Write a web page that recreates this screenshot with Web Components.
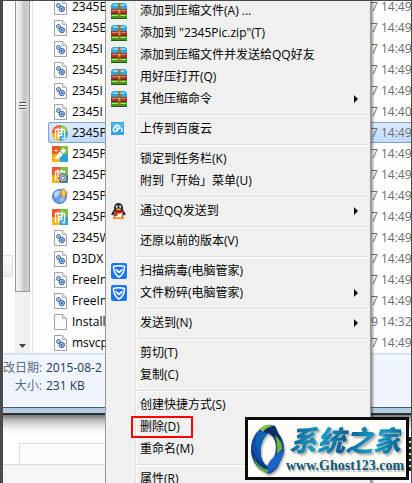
<!DOCTYPE html>
<html lang="zh-CN">
<head>
<meta charset="utf-8">
<title>Context menu</title>
<style>
  body {
    margin: 0;
    height: 100vh;
    overflow: hidden;
    font: 12px/18px "Open Sans", "Noto Sans CJK SC", sans-serif;
    color: #000;
  }
</style>
</head>
<body>
<desktop-view>
  <explorer-window>
    <tree-pane slot="tree"></tree-pane>
    <file-list slot="files"></file-list>
    <details-pane slot="details"></details-pane>
  </explorer-window>
  <page-behind></page-behind>
  <context-menu slot="menu">
    <menu-item icon="zip">添加到压缩文件(A) ...</menu-item>
    <menu-item icon="zip">添加到 "2345Pic.zip"(T)</menu-item>
    <menu-item icon="zip">添加到压缩文件并发送给QQ好友</menu-item>
    <menu-item icon="zip">用好压打开(Q)</menu-item>
    <menu-item icon="zip" submenu>其他压缩命令</menu-item>
    <menu-separator></menu-separator>
    <menu-item icon="cloud">上传到百度云</menu-item>
    <menu-separator></menu-separator>
    <menu-item>锁定到任务栏(K)</menu-item>
    <menu-item>附到「开始」菜单(U)</menu-item>
    <menu-separator></menu-separator>
    <menu-item icon="qq" submenu>通过QQ发送到</menu-item>
    <menu-separator></menu-separator>
    <menu-item>还原以前的版本(V)</menu-item>
    <menu-separator></menu-separator>
    <menu-item icon="shield">扫描病毒(电脑管家)</menu-item>
    <menu-item icon="shield" submenu>文件粉碎(电脑管家)</menu-item>
    <menu-separator></menu-separator>
    <menu-item submenu>发送到(N)</menu-item>
    <menu-separator></menu-separator>
    <menu-item>剪切(T)</menu-item>
    <menu-item>复制(C)</menu-item>
    <menu-separator></menu-separator>
    <menu-item>创建快捷方式(S)</menu-item>
    <menu-item marked>删除(D)</menu-item>
    <menu-item>重命名(M)</menu-item>
    <menu-separator></menu-separator>
    <menu-item>属性(R)</menu-item>
  </context-menu>
  <site-badge slot="badge"></site-badge>
</desktop-view>

<script>
const TILE = `
  <path d="M0 0H8V8H0Z" fill="#f0562c"/><path d="M8 0H16V8H8Z" fill="#7cc142"/>
  <path d="M0 8H8V16H0Z" fill="#f9b21c"/><path d="M8 8H16V16H8Z" fill="#2ba3dc"/>`;
const GLYPH = `<path d="M3.500 13.500V4.500H12.500V13.500H10M6 2.500V7M10 2.500V7M5.500 7.500H10.500M5.500 10.500H10.500M6.500 7.500V13.500M9.500 7.500V11" fill="none" stroke="#fff" stroke-width="1.300"/>`;
const PAGE = `
  <path d="M2.500 .5H10.500L14.500 4.500V15.500H2.500Z" fill="#fcfcfc" stroke="#a2a2a2"/>
  <path d="M10.500 .5V4.500H14.500" fill="#e6e6e6" stroke="#b0b0b0"/>`;

const ICONS = {
  page: PAGE,
  dll: PAGE + `
    <circle cx="6.500" cy="6.500" r="2" fill="#c5dcf2" stroke="#3a6aa8"/>
    <circle cx="6.500" cy="6.500" r=".6" fill="#3a6aa8"/>
    <circle cx="9.800" cy="10" r="2.600" fill="#a9c9e8" stroke="#3a6aa8"/>
    <circle cx="9.800" cy="10" r="2.900" fill="none" stroke="#3a6aa8" stroke-dasharray=".8 1.200"/>
    <circle cx="9.800" cy="10" r=".9" fill="#1d4c8c"/>`,
  round: `
    <clipPath id="c"><circle cx="8" cy="8" r="8"/></clipPath>
    <g clip-path="url(#c)">${TILE}${GLYPH}</g>`,
  tile: TILE + GLYPH,
  brush: TILE + `
    <path d="M2.500 12.500L7.500 5.500L11 8.500L6 13.500L5 12L4.500 13.500Z" fill="#fff"/>
    <path d="M8.500 5L11.500 2L14 4.500L11.500 7.500Z" fill="#fff"/>
    <path d="M2.500 4.500H5.500M4 3V6" stroke="#ffe4a0"/>`,
  gear: TILE + GLYPH + `
    <circle cx="11" cy="11" r="4" fill="#8d9399" stroke="#555b62" stroke-width="2" stroke-dasharray="1.600 1.200"/>
    <circle cx="11" cy="11" r="3.300" fill="#aeb4ba"/><circle cx="11" cy="11" r="1.500" fill="#f4f4f4" stroke="#555b62" stroke-width=".6"/>`,
  globe: `
    <circle cx="7.500" cy="8.500" r="7" fill="#6d9ee8" stroke="#4b78c9"/>
    <path d="M2 6Q4 2 8 3Q9 6 6 7Q6 10 3 9Z" fill="#bcd8fb"/><path d="M8 10Q12 8 13 10Q11 14 8 14Z" fill="#9cc2f5"/>
    <path d="M11.500 .5L15.500 5H13.500V9H9.500V5H7.500Z" fill="#f7c667" stroke="#b98527"/>`,
  zip: `
    <path d="M2 0H14L16 2V6H0V2Z" fill="#2ba6df"/><path d="M2.500 1H13.500L14.500 3H1.500Z" fill="#7fd4f5"/>
    <path d="M0 6H16V11H0Z" fill="#b43222"/><path d="M1 7.500H15" stroke="#ef8160"/><path d="M0 10.500H16" stroke="#7d2018"/>
    <path d="M0 11H16V15.500H0Z" fill="#3a9a22"/><path d="M1 12.500H15" stroke="#b0e665"/><path d="M0 15.500H16" stroke="#1d6212"/>
    <path d="M7 0H9.500V15H7Z" fill="#a96d23"/><path d="M6.500 6H10V10H6.500Z" fill="#d49a49" stroke="#75410e" stroke-width=".7"/>`,
  cloud: `
    <path d="M0 1H13V14H0Z" fill="#35a3e0"/><path d="M1 2H12V6H1Z" fill="#55b9ec"/>
    <circle cx="4.300" cy="8.500" r="2" fill="none" stroke="#fff" stroke-width="1.400"/>
    <path d="M4 6Q5 3.500 7.300 4.500Q9 5.500 8 7.500L6 9.500M8.500 7Q11 6.500 11 9V11" fill="none" stroke="#fff" stroke-width="1.400"/>`,
  qq: `
    <path d="M3 7Q.5 9.500 .5 12Q1.500 12.500 2.500 11ZM12 7Q14.500 9.500 14.500 12Q13.500 12.500 12.500 11Z" fill="#151515"/>
    <ellipse cx="7.500" cy="10" rx="5.500" ry="5.500" fill="#151515"/><ellipse cx="7.500" cy="11" rx="4" ry="4" fill="#fff"/>
    <ellipse cx="7.500" cy="4.800" rx="4.500" ry="4.800" fill="#222"/>
    <ellipse cx="6" cy="3.800" rx="1.200" ry="1.600" fill="#fff"/><ellipse cx="9" cy="3.800" rx="1.200" ry="1.600" fill="#fff"/>
    <path d="M6 3.500H7V4.800H6ZM8.300 3.500H9.300V4.800H8.300Z" fill="#000"/>
    <ellipse cx="7.500" cy="6.500" rx="2.700" ry="1" fill="#f8a81d"/>
    <path d="M2.500 7.500Q7.500 10 12.500 7.500L13 9.500Q10 11 6.500 10.500V13H4V10Q2.500 9.500 2.500 7.500Z" fill="#e32b20"/>
    <ellipse cx="4.500" cy="15" rx="3" ry="1.200" fill="#f29b1b"/><ellipse cx="10.500" cy="15" rx="3" ry="1.200" fill="#f29b1b"/>`,
  shield: `
    <rect width="16" height="16" rx="2" fill="#1b76f2"/>
    <path d="M2.500 3.500Q8 1.800 13.500 3.500Q13.500 10.500 8 14Q2.500 10.500 2.500 3.500Z" fill="none" stroke="#fff" stroke-width="1.500"/>
    <path d="M4.500 5.500L8 8L11.500 5.500V7.500L8 10.500L4.500 7.500Z" fill="#fff"/>`
};

function icon(name) {
  return `<svg width="16" height="16" viewBox="0 0 16 16" aria-hidden="true">${ICONS[name] || ''}</svg>`;
}

class DesktopView extends HTMLElement {
  constructor() {
    super();
    this.attachShadow({mode: 'open'}).innerHTML = `
      <style>
        :host {
          display: flex;
          flex-direction: column;
          position: relative;
          height: 100%;
          box-sizing: border-box;
          overflow: hidden;
          border: solid #4a4a4c;
          border-width: 1px 1px 0 3px;
          background: #fff;
        }
        ::slotted([slot="menu"]) {
          position: absolute;
          top: -1px;
          left: 102px;
          right: 40px;
        }
        ::slotted([slot="badge"]) {
          position: absolute;
          right: 2px;
          bottom: 3px;
        }
      </style>
      <slot></slot>
      <slot name="menu"></slot>
      <slot name="badge"></slot>
    `;
  }
}

class ExplorerWindow extends HTMLElement {
  constructor() {
    super();
    this.attachShadow({mode: 'open'}).innerHTML = `
      <style>
        :host {
          display: block;
          flex: none;
          border-bottom: 2px solid #2c3338;
          background: #fdfdfe;
        }
        .panes {
          display: flex;
          overflow: hidden;
        }
        .frame {
          height: 5px;
          border-top: 1px solid #4f5c6b;
          background: #b3cbe3;
        }
      </style>
      <div class="panes">
        <slot name="tree"></slot>
        <slot name="files"></slot>
      </div>
      <slot name="details"></slot>
      <div class="frame"></div>
    `;
  }
}

class TreePane extends HTMLElement {
  constructor() {
    super();
    this.attachShadow({mode: 'open'}).innerHTML = `
      <style>
        :host {
          display: flex;
          flex: none;
          width: 29px;
          border-right: 1px solid #d3e2f5;
        }
        .tree {
          flex: 1;
          display: flex;
          flex-direction: column;
          justify-content: flex-end;
        }
        .hover {
          height: 20px;
          margin: 0 2px 76px 0;
          border: 1px solid #dedede;
          border-left: 0;
          border-radius: 0 2px 2px 0;
          background: linear-gradient(#fafafa, #ededed);
        }
        .bar {
          width: 15px;
          display: flex;
          flex-direction: column;
          margin-right: 2px;
          background: #f0f0f0;
        }
        .thumb {
          flex: 1;
          display: grid;
          align-content: end;
          justify-content: center;
          box-sizing: border-box;
          padding-bottom: 181px;
          border: 1px solid #999;
          border-top: 0;
          background: linear-gradient(90deg, #f6f6f6, #e2e2e4 40%, #c3c4c8 60%, #d2d3d6);
        }
        .grip {
          width: 7px;
          height: 8px;
          background: repeating-linear-gradient(#555 0 1px, #eee 1px 3px);
        }
        .track {
          height: 48px;
        }
        svg {
          display: block;
          height: 13px;
        }
      </style>
      <div class="tree"><div class="hover"></div></div>
      <div class="bar">
        <div class="thumb"><div class="grip"></div></div>
        <div class="track"></div>
        <svg width="15" viewBox="0 0 15 13"><path d="M4 4H11L7.500 8Z" fill="#444"/></svg>
      </div>
    `;
  }
}

class FileList extends HTMLElement {
  constructor() {
    super();
    const files = [
      ['dll', '2345E', '7 14:49'],
      ['dll', '2345E', '7 14:49'],
      ['dll', '2345I', '7 14:49'],
      ['dll', '2345I', '7 14:49'],
      ['dll', '2345I', '7 14:49'],
      ['dll', '2345I', '7 14:40'],
      ['round', '2345P', '7 14:49'],
      ['brush', '2345P', '7 14:49'],
      ['gear', '2345P', '7 14:49'],
      ['globe', '2345P', '7 14:49'],
      ['tile', '2345P', '7 14:49'],
      ['dll', '2345W', '7 14:49'],
      ['dll', 'D3DX', '7 14:49'],
      ['dll', 'FreeIm', '7 14:49'],
      ['dll', 'FreeIm', '7 14:49'],
      ['page', 'Install', '9 14:32'],
      ['dll', 'msvcp', '7 14:49']
    ];
    const rows = files.map(([kind, name, date]) => `
      <tr class="${kind === 'round' ? 'selected' : ''}">
        <td class="icon">${icon(kind)}</td>
        <td>${name}</td>
        <td class="date">${date}</td>
      </tr>`).join('');
    this.attachShadow({mode: 'open'}).innerHTML = `
      <style>
        :host {
          display: block;
          flex: 1;
          min-width: 0;
          padding-left: 15px;
        }
        table {
          width: 100%;
          margin-top: -5px;
          table-layout: fixed;
          border-spacing: 0;
        }
        td {
          height: 21px;
          padding: 0;
          line-height: 18px;
          white-space: nowrap;
        }
        .icon {
          width: 20px;
          padding-left: 4px;
        }
        .date {
          width: 40px;
          color: #6d6d6d;
        }
        svg {
          display: block;
        }
        .selected td {
          height: 19px;
          border: solid #7da2ce;
          border-width: 1px 0;
          background: linear-gradient(#dcebfc, #c1dbfc);
        }
        .selected .icon {
          border-left-width: 1px;
          border-radius: 3px 0 0 3px;
          padding-left: 3px;
        }
      </style>
      <table aria-label="文件"><tbody>${rows}</tbody></table>
    `;
  }
}

class DetailsPane extends HTMLElement {
  constructor() {
    super();
    this.attachShadow({mode: 'open'}).innerHTML = `
      <style>
        :host {
          display: block;
          height: 48px;
          padding-top: 4px;
          border-top: 2px solid #d5e1f1;
          background: #f0f4fc;
        }
        dl {
          display: grid;
          grid-template-columns: 39px 1fr;
          column-gap: 4px;
          margin: 0;
        }
        dt {
          text-align: right;
          white-space: nowrap;
          color: #5a6b80;
        }
        dd {
          margin: 0;
          color: #1e395b;
        }
      </style>
      <dl>
        <dt>改日期:</dt><dd>2015-08-2</dd>
        <dt>大小:</dt><dd>231 KB</dd>
      </dl>
    `;
  }
}

class PageBehind extends HTMLElement {
  constructor() {
    super();
    this.attachShadow({mode: 'open'}).innerHTML = `
      <style>
        :host {
          display: grid;
          grid-template: auto 1fr / 1fr 4px;
          flex: 1;
          background: linear-gradient(#777, #c4c4c4 6px, #f2f2f2 14px, #fff 20px);
        }
        .box {
          height: 20px;
          margin: 28px 0 0 16px;
          border: solid #d9dadc;
          border-width: 1px 0 0 1px;
          background: #fcfcfc;
        }
        .code {
          grid-area: 1 / 2 / 3 / 3;
          margin: 22px 0 12px;
          background: repeating-linear-gradient(#222 0 4px, #ddd 4px 6px);
        }
        .foot {
          border-top: 1px solid #d9dadc;
          background: #f4f5f7;
        }
      </style>
      <div class="box"></div>
      <div class="code"></div>
      <div class="foot"></div>
    `;
  }
}

class ContextMenu extends HTMLElement {
  constructor() {
    super();
    this.attachShadow({mode: 'open'}).innerHTML = `
      <style>
        :host {
          display: block;
          box-sizing: border-box;
          border: solid #979797;
          border-width: 0 1px;
          background: linear-gradient(90deg, #f0f0f0 29px, #e2e3e3 29px 30px, #fff 30px 31px, #f0f0f0 31px);
          box-shadow: 2px 0 2px rgba(0, 0, 0, .4);
        }
        nav {
          display: flex;
          flex-direction: column;
        }
      </style>
      <nav role="menu"><slot></slot></nav>
    `;
  }
}

class MenuItem extends HTMLElement {
  connectedCallback() {
    const arrow = this.hasAttribute('submenu')
      ? '<svg width="4" height="8" viewBox="0 0 4 8"><path d="M0 0L4 4L0 8Z" fill="#111"/></svg>' : '';
    this.attachShadow({mode: 'open'}).innerHTML = `
      <style>
        :host {
          display: block;
        }
        button {
          display: grid;
          grid-template-columns: 25px 1fr auto;
          align-items: center;
          width: 100%;
          height: 22px;
          padding: 0 12px 0 5px;
          border: 0;
          background: none;
          font: inherit;
          color: inherit;
          text-align: left;
          white-space: nowrap;
        }
        svg {
          display: block;
        }
        span {
          justify-self: start;
          padding: 0 4px;
        }
        :host([marked]) span {
          box-sizing: border-box;
          height: 22px;
          margin-left: -5px;
          padding: 0 11px 0 7px;
          border: 2px solid #f00;
        }
      </style>
      <button type="button" role="menuitem">${icon(this.getAttribute('icon'))}<span><slot></slot></span>${arrow}</button>
    `;
  }
}

class MenuSeparator extends HTMLElement {
  constructor() {
    super();
    this.attachShadow({mode: 'open'}).innerHTML = `
      <style>
        :host {
          display: block;
          padding: 4px 2px 2px 30px;
        }
        hr {
          margin: 0;
          border: solid;
          border-width: 1px 0;
          border-color: #dedede #0000 #fff;
        }
      </style>
      <hr>
    `;
  }
}

class SiteBadge extends HTMLElement {
  constructor() {
    super();
    this.attachShadow({mode: 'open'}).innerHTML = `
      <style>
        :host {
          display: flex;
          align-items: center;
          box-sizing: border-box;
          width: 164px;
          height: 63px;
          padding-left: 2px;
          border: 3px solid #0c0c0c;
          background: #fdfdf8;
        }
        svg {
          flex: none;
          filter: drop-shadow(1px 2px 1px #aaa);
        }
        a {
          display: grid;
          justify-items: center;
          color: #10587a;
          text-decoration: none;
          white-space: nowrap;
        }
        strong {
          font: italic 900 28px/34px "Noto Sans CJK SC", sans-serif;
          color: transparent;
          background: linear-gradient(110deg, #0c5688, #1ba0c8 30%, #0d5e94 50%, #18a2cb 75%, #0c5688);
          -webkit-background-clip: text;
          background-clip: text;
          filter: drop-shadow(2px 2px 1px #aaa);
        }
        small {
          font: bold 14px/20px "Liberation Serif", serif;
          text-shadow: 1px 2px 1px #bbb;
        }
      </style>
      <svg width="36" height="54" viewBox="0 0 36 54" aria-hidden="true">
        <path d="M9 8Q16 0 25 4L28 11Q35 18 34 31L30 40Q27 50 18 52L9 46Q1 37 1 25Q2 14 9 8ZM18 11Q9 20 11 33Q12 40 17 44Q26 37 26 24Q25 14 18 11Z" fill="#174ca8" fill-rule="evenodd"/>
        <path d="M25 4L28 11Q32 16 31 24L27 31Q28 15 18 11L13 10Q18 4 25 4Z" fill="#0b2d68"/>
        <path d="M9 8Q3 17 8 29L11 33Q9 20 18 11Q12 12 9 8Z" fill="#0a65b4"/>
        <path d="M25 13Q32 19 32 27L27 32Q28 22 25 13Z" fill="#74b72b"/>
        <path d="M3 17Q1 32 10 39L17 44L18 50Q4 48 1 30Z" fill="#083c86"/>
        <path d="M4 35Q7 45 18 48L18 52L9 46Q5 42 4 35Z" fill="#64ad38"/>
        <path d="M34 29Q23 32 17 44L18 50Q30 47 34 29Z" fill="#1b63c4"/>
        <path d="M10 7Q15 1 23 4Q16 5 13 10Z" fill="#8bc63e"/>
      </svg>
      <a href="#"><strong>系统之家</strong><small>www.Ghost123.com</small></a>
    `;
  }
}

customElements.define('desktop-view', DesktopView);
customElements.define('explorer-window', ExplorerWindow);
customElements.define('tree-pane', TreePane);
customElements.define('file-list', FileList);
customElements.define('details-pane', DetailsPane);
customElements.define('page-behind', PageBehind);
customElements.define('context-menu', ContextMenu);
customElements.define('menu-item', MenuItem);
customElements.define('menu-separator', MenuSeparator);
customElements.define('site-badge', SiteBadge);
</script>
</body>
</html>
